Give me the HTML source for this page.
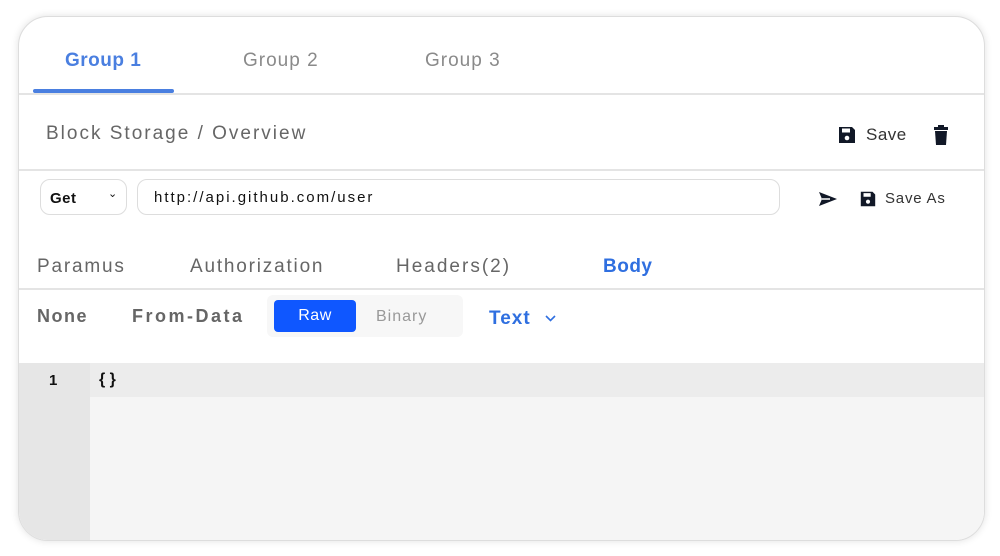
<!DOCTYPE html><html><head><style>
*{margin:0;padding:0;box-sizing:border-box}
body{width:1000px;height:556px;background:#fff;font-family:"Liberation Sans",sans-serif;position:relative;overflow:hidden}
.card{position:absolute;left:18px;top:16px;width:967px;height:525px;border-radius:30px;border:1px solid #ddd;box-shadow:0 0 8px rgba(0,0,0,.12);overflow:hidden;background:#fff}
.a{position:absolute;white-space:nowrap}
.hr{position:absolute;left:0;right:0;height:2px;background:#e4e4e4}
</style></head><body><div class="card">
<div class="a" style="left:46px;top:33px;font-size:19px;font-weight:bold;color:#4a7fe0;letter-spacing:.5px">Group 1</div>
<div class="a" style="left:224px;top:33px;font-size:19px;color:#8a8a8a;letter-spacing:1px">Group 2</div>
<div class="a" style="left:406px;top:33px;font-size:19px;color:#8a8a8a;letter-spacing:1px">Group 3</div>
<div class="a" style="left:14px;top:72px;width:141px;height:4px;background:#4a7fe0;border-radius:2px"></div>
<div class="hr" style="top:76px"></div>
<div class="a" style="left:27px;top:106px;font-size:19px;color:#666;letter-spacing:2px">Block Storage / Overview</div>
<svg class="a" style="left:818px;top:108px" width="20" height="20" viewBox="0 0 20 20"><path d="M2 2h13l3 3v13H2z" fill="#111827"/><rect x="5" y="3.5" width="8" height="4" fill="#fff"/><circle cx="10" cy="13" r="2.3" fill="#fff"/></svg>
<div class="a" style="left:847px;top:108px;font-size:17px;color:#333;letter-spacing:.5px">Save</div>
<svg class="a" style="left:914px;top:107px" width="16" height="22" viewBox="0 0 16 22"><rect x="1" y="3" width="14" height="3" fill="#111827"/><rect x="5" y="1" width="6" height="2" fill="#111827"/><path d="M2 7h12l-1 14H3z" fill="#111827"/></svg>
<div class="hr" style="top:152px"></div>
<div class="a" style="left:21px;top:162px;width:87px;height:36px;border:1px solid #ddd;border-radius:10px"></div>
<div class="a" style="left:31px;top:173px;font-size:15px;font-weight:bold;color:#111;letter-spacing:.5px">Get</div>
<div class="a" style="left:89px;top:170px;font-size:11px;color:#111">&#8964;</div>
<div class="a" style="left:118px;top:162px;width:643px;height:36px;border:1px solid #ddd;border-radius:10px"></div>
<div class="a" style="left:135px;top:172px;font-size:15px;color:#111;letter-spacing:2px">http://api.github.com/user</div>
<svg class="a" style="left:799px;top:174px" width="20" height="16" viewBox="0 0 20 16"><path d="M1 1l18 7-18 7 3-7z" fill="#111827"/><path d="M4 8h8" stroke="#fff" stroke-width="1.5"/></svg>
<svg class="a" style="left:840px;top:173px" width="18" height="18" viewBox="0 0 20 20"><path d="M2 2h13l3 3v13H2z" fill="#111827"/><rect x="5" y="3.5" width="8" height="4" fill="#fff"/><circle cx="10" cy="13" r="2.3" fill="#fff"/></svg>
<div class="a" style="left:866px;top:173px;font-size:15px;color:#333;letter-spacing:.8px">Save As</div>
<div class="a" style="left:18px;top:239px;font-size:19px;color:#666;letter-spacing:1.8px">Paramus</div>
<div class="a" style="left:171px;top:239px;font-size:19px;color:#666;letter-spacing:1.8px">Authorization</div>
<div class="a" style="left:377px;top:239px;font-size:19px;color:#666;letter-spacing:2px">Headers(2)</div>
<div class="a" style="left:584px;top:239px;font-size:19px;font-weight:bold;color:#2f6fe0;letter-spacing:.5px">Body</div>
<div class="hr" style="top:271px"></div>
<div class="a" style="left:18px;top:289px;font-size:18px;font-weight:bold;color:#666;letter-spacing:1.5px">None</div>
<div class="a" style="left:113px;top:289px;font-size:18px;font-weight:bold;color:#666;letter-spacing:2.5px">From-Data</div>
<div class="a" style="left:248px;top:278px;width:196px;height:42px;background:#f7f7f7;border-radius:6px"></div>
<div class="a" style="left:255px;top:283px;width:82px;height:32px;background:#0f57ff;border-radius:4px;color:#fff;font-size:16px;text-align:center;line-height:32px;letter-spacing:.5px">Raw</div>
<div class="a" style="left:357px;top:291px;font-size:16px;color:#999;letter-spacing:1px">Binary</div>
<div class="a" style="left:470px;top:291px;font-size:19px;font-weight:bold;color:#2f6fe0;letter-spacing:1px">Text</div>
<svg class="a" style="left:526px;top:298px" width="11" height="7" viewBox="0 0 11 7"><path d="M1 1l4.5 4.5L10 1" stroke="#2f6fe0" stroke-width="1.6" fill="none"/></svg>
<div class="a" style="left:0;top:346px;right:0;bottom:0;background:#f5f5f5"></div>
<div class="a" style="left:71px;top:346px;right:0;height:34px;background:#ececec"></div>
<div class="a" style="left:0;top:346px;width:71px;bottom:0;background:#e6e6e6"></div>
<div class="a" style="left:30px;top:355px;font-size:15px;font-weight:bold;color:#111">1</div>
<div class="a" style="left:80px;top:354px;font-size:16px;font-weight:bold;color:#111">{ }</div>
</div></body></html>
